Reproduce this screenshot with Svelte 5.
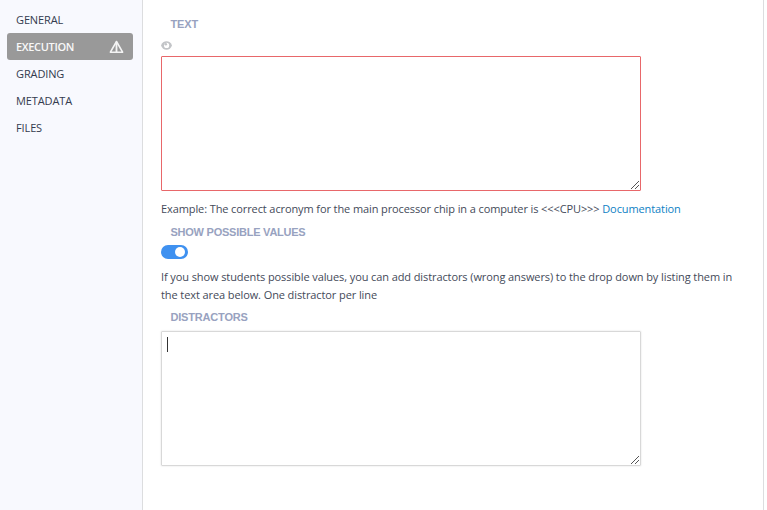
<script>
  const tabs = ['General', 'Execution', 'Grading', 'Metadata', 'Files'];
  let active = $state('Execution');
  let text = $state('');
  let distractors = $state('');
  let showValues = $state(true);
</script>

{#snippet grip()}
  <svg class="grip" width="9" height="9" viewBox="0 0 9 9" shape-rendering="crispEdges" aria-hidden="true">
    {#each [0, 1, 2, 3, 4, 5, 6, 7] as i}
      <rect x={i} y={7 - i} width="1" height="1" fill="#555" />
    {/each}
    {#each [0, 1, 2, 3] as i}
      <rect x={4 + i} y={7 - i} width="1" height="1" fill="#555" />
    {/each}
  </svg>
{/snippet}

<div class="page">
  <nav>
    {#each tabs as tab}
      <button class="tab" class:active={active === tab} onclick={() => (active = tab)}>
        <span>{tab}</span>
        {#if tab === 'Execution'}
          <svg width="15" height="14" viewBox="0 0 15 14" aria-hidden="true">
            <path d="M7.5 1.5L13.6 12.2H1.4Z" fill="none" stroke="#f4f4f4" stroke-width="1.6" stroke-linejoin="round" />
            <path d="M7.5 3V12" stroke="#f4f4f4" stroke-width="1.8" />
          </svg>
        {/if}
      </button>
    {/each}
  </nav>

  <main>
    <div class="label first">TEXT</div>
    <svg class="eye" width="11" height="9" viewBox="0 0 11 9" aria-hidden="true">
      <path fill="#c2c4c7" d="M0 4.5C1 1.700 3 .3 5.500 .3S10 1.700 11 4.500C10 7.300 8 8.700 5.500 8.700S1 7.300 0 4.500Z" />
      <circle cx="5.600" cy="4.400" r="2.600" fill="#fff" />
      <circle cx="4.800" cy="3.300" r="1.300" fill="#c2c4c7" />
    </svg>
    <div class="field error">
      <textarea bind:value={text} aria-label="Text"></textarea>
      {@render grip()}
    </div>
    <p class="example">Example: The correct acronym for the main processor chip in a computer is &lt;&lt;&lt;CPU&gt;&gt;&gt; <a href="#documentation">Documentation</a></p>
    <div class="label values">SHOW POSSIBLE VALUES</div>
    <button class="switch" class:on={showValues} aria-label="Show possible values" onclick={() => (showValues = !showValues)}><i></i></button>
    <p class="hint">If you show students possible values, you can add distractors (wrong answers) to the drop down by listing them in<br />the text area below. One distractor per line</p>
    <div class="label distract">DISTRACTORS</div>
    <div class="field plain">
      <textarea bind:value={distractors} aria-label="Distractors"></textarea>
      <span class="caret"></span>
      {@render grip()}
    </div>
  </main>
</div>

<style>
  .page {
    box-sizing: border-box;
    display: flex;
    width: 767px;
    height: 510px;
    overflow: hidden;
    background: #fff;
    font: 11px/18px 'Open Sans', sans-serif;
    color: #444a59;
  }
  nav {
    box-sizing: border-box;
    width: 143px;
    padding: 6px 9px 0 7px;
    background: #f8f9fe;
    border-right: 1px solid #dcdddf;
  }
  .tab {
    box-sizing: border-box;
    display: flex;
    align-items: center;
    justify-content: space-between;
    width: 126px;
    height: 27px;
    padding: 0 9px;
    border: 0;
    border-radius: 3px;
    background: none;
    font: 11px/27px 'Open Sans', sans-serif;
    letter-spacing: -0.12px;
    color: #343b4e;
    text-transform: uppercase;
  }
  .tab.active {
    background: #999;
    color: #f8f8f8;
    font-weight: 600;
    letter-spacing: -0.35px;
  }
  main {
    box-sizing: border-box;
    width: 621px;
    padding: 15px 18px 0;
    border-right: 1px solid #dcdddf;
  }
  .label {
    height: 18px;
    padding-left: 9.5px;
    font: bold 11px/18px 'Liberation Sans', sans-serif;
    letter-spacing: -0.24px;
    color: #98a2c0;
  }
  .label.first { margin-bottom: 8px; letter-spacing: -0.1px; }
  .eye { display: block; margin-bottom: 6px; }
  .field {
    position: relative;
    box-sizing: border-box;
    width: 480px;
    height: 135px;
    border: 1px solid #e8676a;
    border-radius: 1px;
  }
  .field.plain {
    border-color: #d8d8d8;
    box-shadow: 0 0 2px #ddd;
  }
  textarea {
    box-sizing: border-box;
    display: block;
    width: 100%;
    height: 100%;
    padding: 5px;
    border: 0;
    outline: 0;
    resize: none;
    background: transparent;
    font: 11px/16px 'Open Sans', sans-serif;
    color: #3d4455;
  }
  .grip { position: absolute; right: 0; bottom: 0; }
  .caret {
    position: absolute;
    left: 5px;
    top: 5px;
    width: 1px;
    height: 15px;
    background: #333;
  }
  p { margin: 0; white-space: nowrap; }
  .example { margin-top: 9px; letter-spacing: -0.103px; }
  .hint { letter-spacing: -0.095px; }
  a { color: #0e7fc4; text-decoration: none; }
  .values { margin-top: 5px; }
  .switch {
    box-sizing: border-box;
    display: flex;
    width: 27px;
    height: 14px;
    margin: 4px 0 9px;
    padding: 2px 3px;
    border: 0;
    border-radius: 7px;
    background: #bbb;
  }
  .switch.on { justify-content: flex-end; background: #3f91f0; }
  .switch i { width: 10px; height: 10px; border-radius: 50%; background: #fff; }
  .distract { margin-top: 4px; margin-bottom: 5px; letter-spacing: -0.19px; }
</style>
